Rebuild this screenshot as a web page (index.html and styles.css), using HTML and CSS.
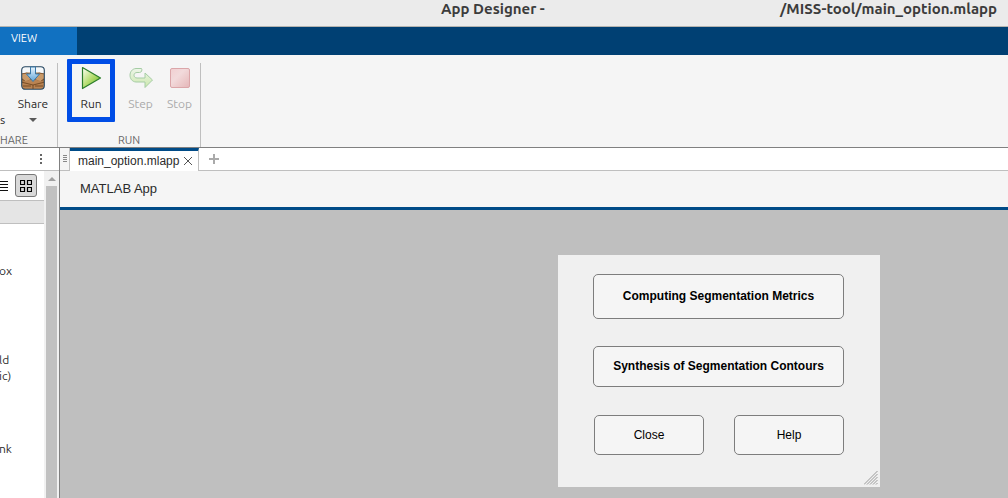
FILE: index.html
```html
<!DOCTYPE html>
<html lang="en">
<head>
<meta charset="utf-8">
<title>App Designer</title>
<link rel="stylesheet" href="styles.css">
</head>
<body>
<div class="app">
  <header class="titlebar"><span>App Designer -</span><span>/MISS-tool/main_option.mlapp</span></header>
  <nav class="ribbon-tabs"><button class="ribbon-tab">VIEW</button></nav>
  <div class="toolstrip">
    <section class="group group-share">
      <div class="tools">
        <span class="cut-label">s</span>
        <button class="tool tool-share">
          <svg width="24" height="24" viewBox="0 0 24 24">
            <defs>
              <linearGradient id="arrow" x2="0" y2="1"><stop offset="0" stop-color="#eaf5fc"/><stop offset="1" stop-color="#5fa5d8"/></linearGradient>
              <clipPath id="round"><rect x="1" y="1" width="22" height="22" rx="3"/></clipPath>
            </defs>
            <g clip-path="url(#round)">
              <rect width="24" height="24" fill="#f5f8fa"/>
              <path d="M0 8L6 6.500H18L24 8V24H0Z" fill="#a87646"/>
              <path d="M0 9L12 13L24 9V13L12 17L0 13Z" fill="#4a2b14"/>
              <path d="M0 8L6 7L13 12L5 16L0 12ZM24 8L18 7L11 12L19 16L24 12Z" fill="#c99a69" stroke="#68401f" stroke-width=".7"/>
              <path d="M0 16L12 13L24 16V24H0Z" fill="#b98352"/>
              <path d="M0 16L12 19L24 16M12 19V24M2 20H10M14 20H22" fill="none" stroke="#704620" stroke-width=".9"/>
            </g>
            <rect x=".7" y=".7" width="22.6" height="22.6" rx="3.5" fill="none" stroke="#24455f" stroke-width="1.1"/>
            <path d="M9.500 1H14.500V8H18.500L12 15.500L5.500 8H9.500Z" fill="url(#arrow)" stroke="#3978a8"/>
          </svg>
          <span>Share</span>
          <svg class="caret" width="8" height="4" viewBox="0 0 8 4"><path d="M0 0H8L4 4Z" fill="#5a5a5a"/></svg>
        </button>
      </div>
      <h2 class="group-name">HARE</h2>
    </section>
    <section class="group group-run">
      <div class="tools">
        <button class="tool tool-run">
          <svg width="24" height="24" viewBox="0 0 24 24">
            <defs><linearGradient id="play" x2="1" y2="1"><stop offset=".1" stop-color="#f1fadc"/><stop offset=".5" stop-color="#b5dd70"/><stop offset="1" stop-color="#5fb21e"/></linearGradient></defs>
            <path d="M3.500 1.500L21.500 12L3.500 22.500Z" fill="url(#play)" stroke="#2b7d2b" stroke-linejoin="round" stroke-width="1.200"/>
          </svg>
          <span>Run</span>
        </button>
        <button class="tool tool-step" disabled>
          <svg width="24" height="24" viewBox="0 0 24 24">
            <defs><linearGradient id="step" x2="0" y2="1"><stop offset="0" stop-color="#edf5e9"/><stop offset="1" stop-color="#cce8ac"/></linearGradient></defs>
            <path d="M12.500 2.500H7C-1 3-1 15.500 7 16H16V21.500L23.500 14L16 7V12H8C4 12 4 6.500 8 6.500H10.500C12.500 6.500 13.500 4 12.500 2.500Z" fill="url(#step)" stroke="#a5cca4" stroke-linejoin="round"/>
          </svg>
          <span>Step</span>
        </button>
        <button class="tool tool-stop" disabled>
          <svg width="24" height="24" viewBox="0 0 24 24">
            <defs><linearGradient id="stop" x2="1" y2="1"><stop offset="0" stop-color="#f1cfd1"/><stop offset=".4" stop-color="#f2dadb"/><stop offset="1" stop-color="#e5b6b8"/></linearGradient></defs>
            <rect x="2.500" y="2.500" width="19" height="19" rx="1.500" fill="url(#stop)" stroke="#dba6a9"/>
          </svg>
          <span>Stop</span>
        </button>
      </div>
      <h2 class="group-name">RUN</h2>
    </section>
  </div>
  <div class="workspace">
    <aside class="library">
      <div class="library-head">
        <button class="icon-button" aria-label="Panel menu"><svg width="2" height="10" viewBox="0 0 2 10"><path d="M0 0H2V2H0ZM0 4H2V6H0ZM0 8H2V10H0Z" fill="#666"/></svg></button>
      </div>
      <div class="library-body">
        <div class="library-main">
          <div class="view-bar">
            <button class="icon-button" aria-label="List view"><svg width="8" height="10" viewBox="0 0 8 10"><path d="M0 0H8V1H0ZM0 3H8V4H0ZM0 6H8V7H0ZM0 9H8V10H0Z" fill="#111"/></svg></button>
            <button class="icon-button grid-view" aria-label="Grid view"><svg width="12" height="12" viewBox="0 0 12 12"><path d="M.5.500H4.500V4.500H.5ZM7.500.500H11.500V4.500H7.500ZM.5 7.500H4.500V11.500H.5ZM7.500 7.500H11.500V11.500H7.500Z" fill="none" stroke="#000" stroke-width="1.200"/></svg></button>
          </div>
          <div class="category"></div>
          <ul class="components"><li>ox</li><li>ld<br>ic)</li><li>nk</li></ul>
        </div>
        <div class="scrollbar">
          <svg width="8" height="4" viewBox="0 0 8 4"><path d="M0 4H8L4 0Z" fill="#a0a0a0"/></svg>
          <div class="thumb"></div>
        </div>
      </div>
    </aside>
    <main class="editor">
      <div class="file-tabs">
        <span class="grip"><svg width="4" height="7" viewBox="0 0 4 7"><path d="M0 0H4V1H0ZM0 2H4V3H0ZM0 4H4V5H0ZM0 6H4V7H0Z" fill="#888"/></svg></span>
        <div class="file-tab"><span>main_option.mlapp</span><button class="icon-button" aria-label="Close file"><svg width="8" height="8" viewBox="0 0 8 8"><path d="M0 0L8 8M8 0L0 8" stroke="#555"/></svg></button></div>
        <button class="icon-button add" aria-label="New file"><svg width="10" height="10" viewBox="0 0 10 10"><path d="M4 0H6V4H10V6H6V10H4V6H0V4H4Z" fill="#aaa"/></svg></button>
        <span class="tab-fill"></span>
      </div>
      <h1 class="app-name">MATLAB App</h1>
      <div class="canvas">
        <div class="figure">
          <button class="choice choice-metrics">Computing Segmentation Metrics</button>
          <button class="choice choice-contours">Synthesis of Segmentation Contours</button>
          <div class="actions"><button class="choice">Close</button><button class="choice">Help</button></div>
          <svg class="resize" width="14" height="14" viewBox="0 0 14 14"><path d="M0 13.500L13.500 0M3 13.500L13.500 3M6 13.500L13.500 6M9 13.500L13.500 9M12 13.500L13.500 12" stroke="#999"/></svg>
        </div>
      </div>
    </main>
  </div>
</div>
</body>
</html>
```
FILE: styles.css
```css
* { box-sizing: border-box; }
body {
  margin: 0;
  font: 12px/16px "Ubuntu", "Noto Sans", sans-serif;
  color: #2b2b2b;
}
button {
  padding: 0;
  border: 0;
  background: none;
  font: inherit;
  color: inherit;
}
svg { display: block; flex: none; }
h1, h2, ul { margin: 0; padding: 0; list-style: none; }

.app {
  display: flex;
  flex-direction: column;
  min-height: 100vh;
  overflow: hidden;
}
.titlebar {
  display: flex;
  justify-content: space-between;
  height: 27px;
  padding: 0 11px 0 441px;
  border-bottom: 1px solid #b4b4b0;
  background: #ebebeb;
  color: #3c3c3c;
  font-size: 15px;
  font-weight: bold;
  line-height: 18px;
}
.ribbon-tabs { display: flex; height: 28px; background: #004073; }
.ribbon-tab {
  width: 77px;
  padding: 0 29px 6px 0;
  background: #1171c1;
  color: #fff;
  font-size: 11px;
}

.toolstrip {
  display: flex;
  height: 93px;
  padding-top: 8px;
  border-bottom: 1px solid #808080;
  background: #f5f5f5;
}
.group {
  display: flex;
  flex-direction: column;
  justify-content: space-between;
  border-right: 1px solid #bfbfbf;
}
.group-share { width: 58px; }
.group-run { width: 143px; }
.group-name {
  color: #666;
  font-size: 11px;
  font-weight: normal;
  line-height: 13px;
}
.group-run .group-name { text-align: center; }
.tools { display: flex; }
.tool {
  display: flex;
  flex-direction: column;
  align-items: center;
  gap: 6px;
  padding-top: 3px;
}
.tool:disabled { color: #aaa; }
.cut-label { width: 16px; padding-top: 49px; }
.tool-share { width: 34px; }
.tool-run {
  width: 48px;
  height: 63px;
  margin: -4px 6px 0 9px;
  padding-top: 2px;
  border: 5px solid #004de6;
  border-radius: 1px;
}
.tool-step { width: 39px; }
.tool-stop { width: 39px; }

.workspace { display: flex; flex: 1; }
.library {
  display: flex;
  flex-direction: column;
  width: 60px;
  border-right: 1px solid #808080;
}
.icon-button { display: flex; align-items: center; justify-content: center; }
.library-head {
  display: flex;
  justify-content: flex-end;
  height: 23px;
  padding-right: 17px;
  border-bottom: 1px solid #bfbfbf;
}
.library-body { display: flex; flex: 1; }
.library-main { flex: 1; }
.view-bar {
  display: flex;
  justify-content: space-between;
  align-items: center;
  height: 30px;
  padding-right: 7px;
  border-bottom: 1px solid #bfbfbf;
}
.grid-view {
  width: 22px;
  height: 23px;
  border: 1px solid #777;
  border-radius: 3px;
  background: #d9d9d9;
}
.category {
  height: 23px;
  border-bottom: 1px solid #bfbfbf;
  background: #e5e5e5;
}
.components {
  display: flex;
  flex-direction: column;
  gap: 57px;
  margin-left: -1px;
  padding-top: 39px;
}
.components li:first-child { margin-bottom: 16px; }
.scrollbar {
  display: flex;
  flex-direction: column;
  align-items: center;
  gap: 5px;
  width: 15px;
  padding-top: 6px;
  background: #f1f1f1;
}
.thumb { flex: 1; width: 11px; background: #c1c1c1; }

.editor { display: flex; flex: 1; flex-direction: column; }
.file-tabs { display: flex; height: 23px; }
.grip {
  width: 10px;
  padding: 7px 3px;
  border-right: 1px solid #bfbfbf;
  border-bottom: 1px solid #bfbfbf;
  background: #f5f5f5;
}
.file-tab {
  display: flex;
  align-items: center;
  gap: 5px;
  padding: 0 6px 0 8px;
  border-top: 3px solid #004b87;
  border-right: 1px solid #bfbfbf;
  font-family: "Liberation Sans", Arial, sans-serif;
}
.add { width: 30px; border-bottom: 1px solid #bfbfbf; }
.tab-fill { flex: 1; border-bottom: 1px solid #bfbfbf; }
.app-name {
  padding: 10px 20px;
  border-bottom: 3px solid #004b87;
  background: #f5f5f5;
  font: 13px/16px "Liberation Sans", Arial, sans-serif;
}
.canvas {
  display: flex;
  flex: 1;
  align-items: flex-start;
  justify-content: flex-end;
  padding: 45px 128px 11px 0;
  background: #bfbfbf;
}
.figure {
  position: relative;
  display: flex;
  flex-direction: column;
  width: 322px;
  padding: 19px 36px 32px 35px;
  background: #f0f0f0;
}
.choice {
  height: 40px;
  border: 1px solid #7d7d7d;
  border-radius: 5px;
  background: #f5f5f5;
  color: #000;
  font: 12px/16px "Liberation Sans", Arial, sans-serif;
}
.choice-metrics,
.choice-contours { padding-bottom: 2px; font-weight: bold; }
.choice-metrics { height: 45px; margin-bottom: 27px; }
.choice-contours { height: 41px; margin-bottom: 28px; }
.actions {
  display: grid;
  grid-template-columns: 1fr 1fr;
  gap: 30px;
  padding-left: 1px;
}
.resize { position: absolute; right: 2px; bottom: 2px; }
```
